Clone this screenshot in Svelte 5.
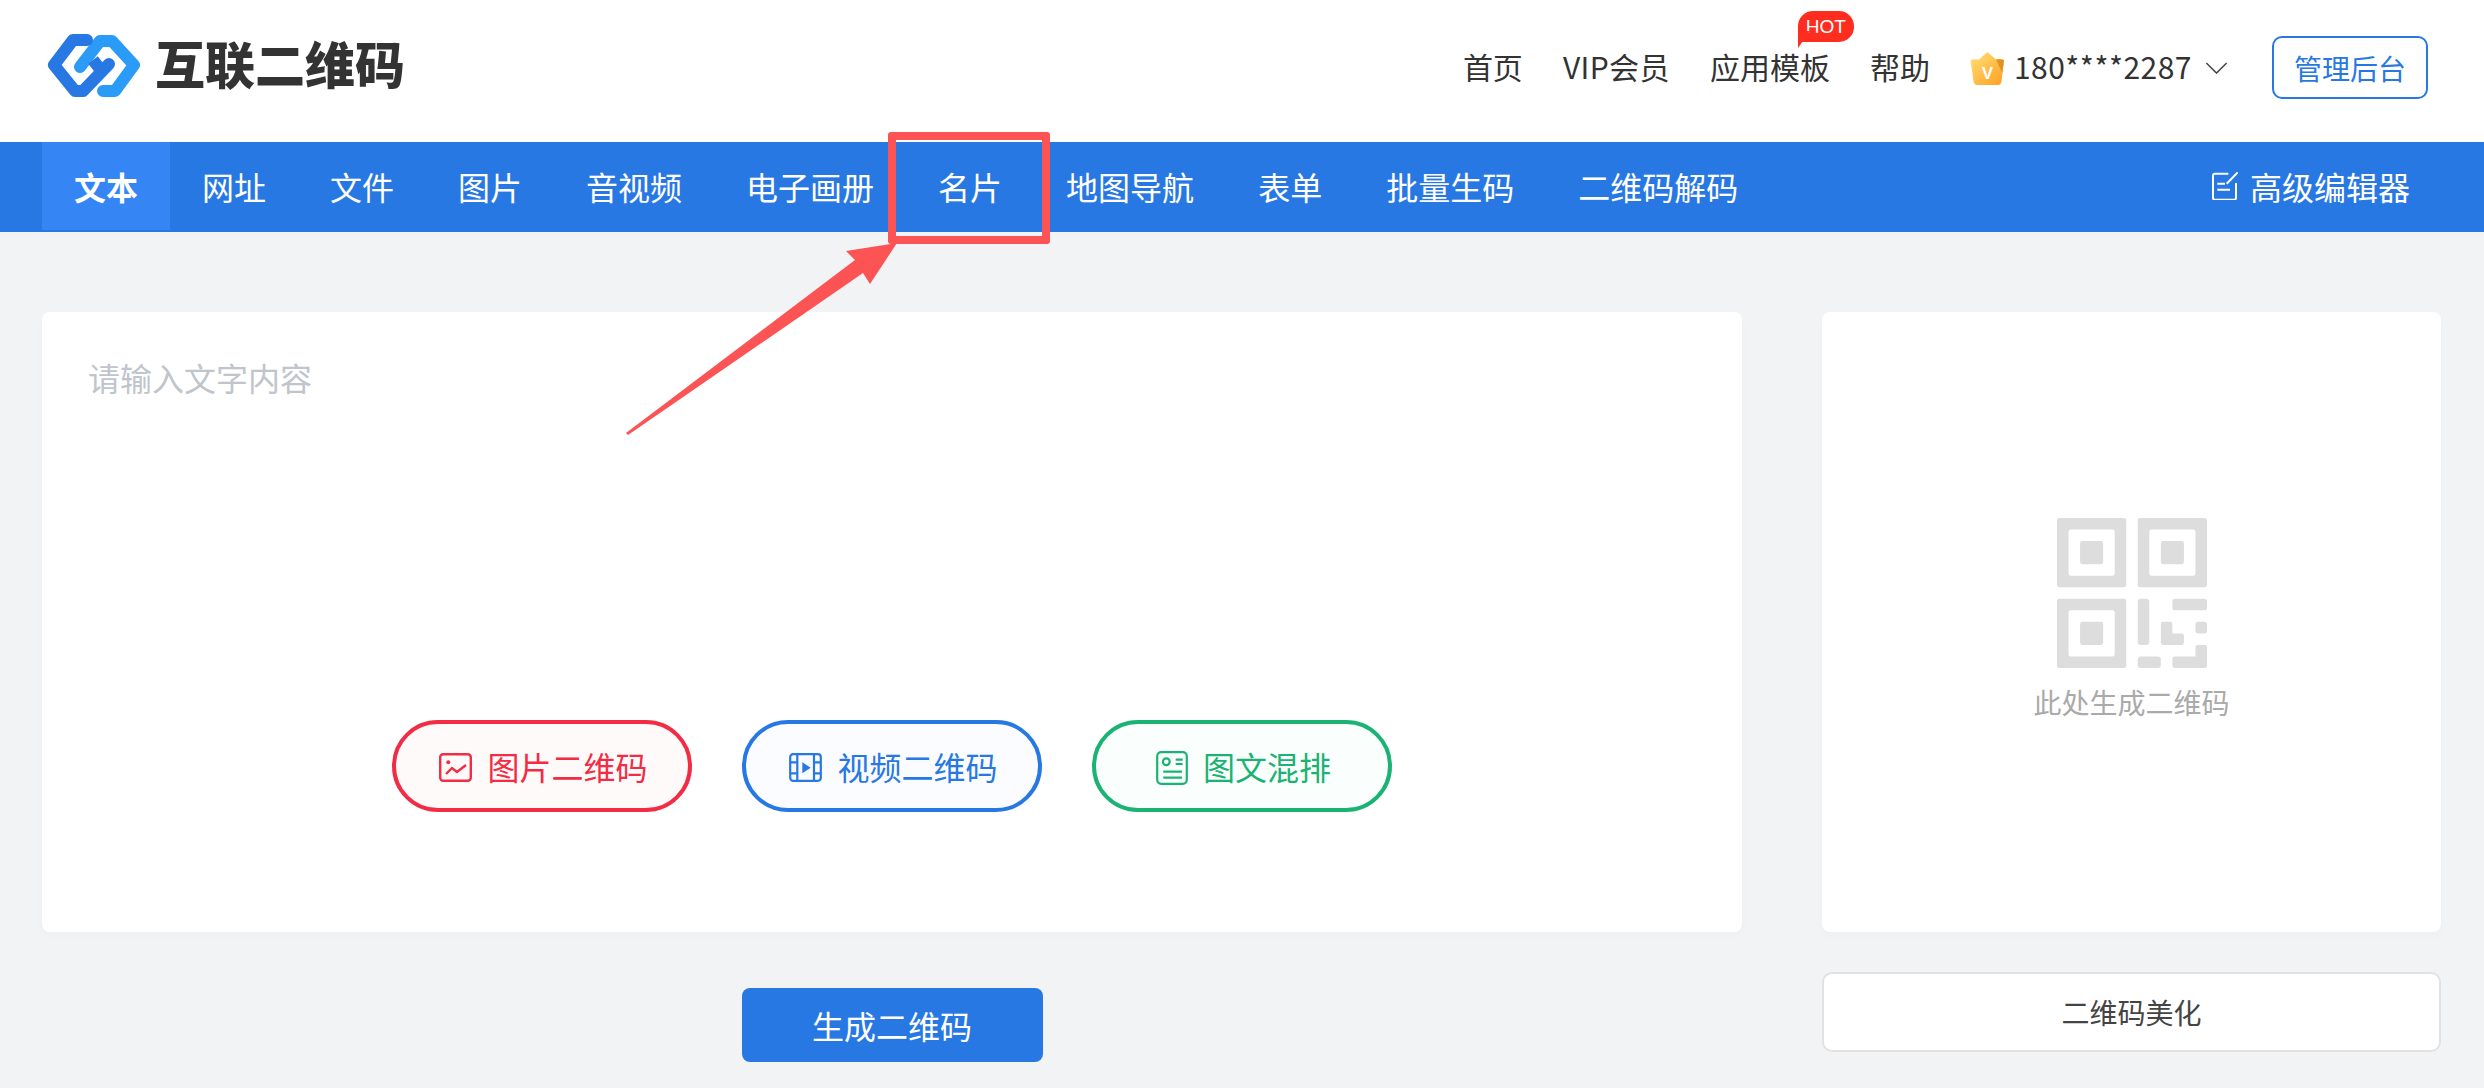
<script>
	const mainTabs = [
		'文本',
		'网址',
		'文件',
		'图片',
		'音视频',
		'电子画册',
		'名片',
		'地图导航',
		'表单',
		'批量生码',
		'二维码解码'
	];
	// top left corner of the three finder squares in the qr placeholder
	const finders = [
		[0, 0],
		[7, 0],
		[0, 7]
	];
</script>

<div class="page">
	<header class="top">
		<div class="logo">
			<svg class="logo-mark" viewBox="0 0 94 65" fill="none" stroke-width="12" stroke-linecap="round" stroke-linejoin="round">
				<path d="M33 34L53 8H65L87 32L68 58H56" stroke="#2a9cf8" />
				<path d="M40 7H26L7 32L28 58H36L62 31" stroke="#2878e4" />
				<path d="M53 36L46 27" stroke="#2878e4" stroke-linecap="butt" />
			</svg>
			<span class="logo-text">互联二维码</span>
		</div>
		<nav class="links">
			<a href="#home">首页</a>
			<a href="#vip" class="vip">VIP会员</a>
			<a href="#tpl" class="tpl">应用模板<span class="hot">HOT</span></a>
			<a href="#help">帮助</a>
			<div class="user">
				<svg class="crown" viewBox="0 0 35 34">
					<defs>
						<linearGradient id="crownFill" x1="0" y1="0" x2="1" y2="1">
							<stop offset="0" stop-color="#ffe27a" />
							<stop offset="1" stop-color="#ff9d1f" />
						</linearGradient>
					</defs>
					<path
						d="M17.3 1L26 8.5Q31 8 34 9L31.5 30Q31 34 28 34H7Q4 34 3.5 30L0.5 9Q4 8 9 8.5Z"
						fill="url(#crownFill)"
					/>
					<path d="M26 8.5Q31 8 34 9L32.4 22Z" fill="#e2921f" />
					<text x="17.5" y="28" class="crown-v">V</text>
				</svg>
				<span class="phone">180****2287</span>
				<svg class="chevron" viewBox="0 0 24 13" fill="none" stroke="#444" stroke-width="1.6">
					<path d="M1 1L12 12L23 1" />
				</svg>
			</div>
			<button class="admin">管理后台</button>
		</nav>
	</header>

	<div class="tabbar">
		<div class="tabs">
			{#each mainTabs as tab, i}
				<a href="#tab" class="tab" class:active={i === 0}>{tab}</a>
			{/each}
		</div>
		<a href="#editor" class="editor">
			<svg viewBox="0 0 26 28" fill="none" stroke="#fff" stroke-width="2">
				<path d="M16.3 1.7H3Q1 1.7 1 3.7V25.7Q1 27.7 3 27.7H22Q24 27.7 24 25.7V11" />
				<path d="M5.3 11.7H13M5.3 17.7H18M14.7 11.7L25.7 0.3" />
			</svg>
			高级编辑器
		</a>
	</div>

	<main class="content">
		<section class="left">
			<div class="card editor-card">
				<div class="placeholder">请输入文字内容</div>
				<div class="pills">
					<button class="pill red">
						<svg viewBox="0 0 33 29" fill="none" stroke="currentColor" stroke-width="2.4">
							<rect x="1.2" y="1.2" width="30.6" height="26.6" rx="3" />
							<path d="M7 21L13 15L18 19L27 12" />
							<circle cx="9.3" cy="9.3" r="2" fill="currentColor" stroke="none" />
						</svg>
						图片二维码
					</button>
					<button class="pill blue">
						<svg viewBox="0 0 33 29" fill="none" stroke="currentColor" stroke-width="2.2">
							<rect x="1.2" y="1.2" width="30.6" height="26.6" rx="3" />
							<path d="M8.3 1V28M25 1V28M1 9.3H8.3M1 20.3H8.3M25 9.3H32M25 20.3H32" />
							<path d="M13.3 9.3L21.7 14.7L13.3 20.3Z" fill="currentColor" stroke="none" />
						</svg>
						视频二维码
					</button>
					<button class="pill green">
						<svg viewBox="0 0 32 34" fill="none" stroke="currentColor" stroke-width="2.2">
							<rect x="1.2" y="1.2" width="29.6" height="31.6" rx="4" />
							<circle cx="10.3" cy="10.7" r="3.4" />
							<path d="M19.7 8.7H26.7M19.7 13H26.7M7.3 20.7H26M7.3 26.7H26" />
						</svg>
						图文混排
					</button>
				</div>
			</div>
			<button class="generate">生成二维码</button>
		</section>

		<aside class="right">
			<div class="card preview">
				<svg class="qr" viewBox="0 0 13 13" fill="#ddd">
					{#each finders as [fx, fy]}
						<rect x={fx} y={fy} width="6" height="6" rx="0.2" />
						<rect x={fx + 1} y={fy + 1} width="4" height="4" rx="0.2" fill="#fff" />
						<rect x={fx + 2} y={fy + 2} width="2" height="2" rx="0.2" />
					{/each}
					<rect x="7" y="7" width="1" height="4" rx="0.25" />
					<rect x="10" y="7" width="3" height="1" rx="0.25" />
					<rect x="12" y="9" width="1" height="1" rx="0.25" />
					<rect x="7" y="12" width="2" height="1" rx="0.25" />
					<path d="M9.2 9H9.8Q10 9 10 9.2V10H10.8Q11 10 11 10.2V10.8Q11 11 10.8 11H9.2Q9 11 9 10.8V9.2Q9 9 9.2 9Z" />
					<path d="M12.2 11H12.8Q13 11 13 11.2V12.8Q13 13 12.8 13H10.2Q10 13 10 12.8V12.2Q10 12 10.2 12H12V11.2Q12 11 12.2 11Z" />
				</svg>
				<p>此处生成二维码</p>
			</div>
			<button class="beautify">二维码美化</button>
		</aside>
	</main>

	<!-- annotation drawn on top of the page -->
	<div class="mark-box"></div>
	<svg class="mark-arrow" viewBox="0 0 2484 1088">
		<path d="M626 433L855 260L846 251L897 243L870 284L863 273L628 435Z" fill="#fc5454" />
	</svg>
</div>

<style>
	:global(body) {
		margin: 0;
		background: #f1f3f5;
	}
	.page {
		position: relative;
		height: 1088px;
		overflow: hidden;
		font-family: 'Noto Sans CJK SC', 'Noto Sans', sans-serif;
		color: #333;
	}
	a {
		color: inherit;
		text-decoration: none;
	}
	button {
		font-family: inherit;
		cursor: pointer;
	}
	.top {
		display: flex;
		align-items: center;
		justify-content: space-between;
		height: 142px;
		background: #fff;
		padding: 0 56px 11px 47px;
		box-sizing: border-box;
	}
	.logo {
		display: flex;
		align-items: center;
		gap: 14px;
	}
	.logo-mark {
		width: 94px;
		height: 65px;
	}
	.logo-text {
		margin-bottom: 8px;
		font-size: 50px;
		font-weight: 900;
		line-height: 1;
		color: #333;
	}
	.links {
		display: flex;
		align-items: center;
		gap: 40px;
		margin-top: 4px;
		font-size: 30px;
		line-height: 40px;
		color: #333;
	}
	.links a,
	.phone {
		margin-bottom: 3px;
	}
	.vip {
		letter-spacing: 0.4px;
	}
	.tpl {
		position: relative;
	}
	.hot {
		position: absolute;
		left: 88px;
		top: -35px;
		width: 56px;
		height: 31px;
		background: #ff2d20;
		color: #fff;
		font-family: 'Liberation Sans', sans-serif;
		font-size: 19px;
		line-height: 31px;
		text-align: center;
		border-radius: 15px 15px 15px 0;
	}
	.hot::after {
		content: '';
		position: absolute;
		left: 0;
		top: 20px;
		border-right: 12px solid transparent;
		border-top: 17px solid #ff2d20;
	}
	.user {
		display: flex;
		align-items: center;
		gap: 9px;
	}
	.crown {
		width: 35px;
		height: 34px;
	}
	.crown-v {
		fill: #fff;
		font-family: 'Liberation Sans', sans-serif;
		font-size: 17px;
		font-weight: 700;
		text-anchor: middle;
	}
	.phone {
		font-size: 30px;
		letter-spacing: 0.5px;
	}
	.chevron {
		width: 23px;
		height: 12px;
		margin-left: 4px;
	}
	.admin {
		width: 156px;
		height: 63px;
		margin-left: 4px;
		padding: 0;
		border: 2px solid #2878e4;
		border-radius: 10px;
		background: #fff;
		color: #2878e4;
		font-size: 28px;
	}
	.tabbar {
		display: flex;
		align-items: flex-start;
		justify-content: space-between;
		height: 90px;
		padding: 0 74px 0 42px;
		background: #2878e4;
		color: #fff;
	}
	.tabs {
		display: flex;
	}
	.tab {
		height: 88px;
		padding: 0 32px;
		font-size: 32px;
		line-height: 88px;
	}
	.tab.active {
		background: #3586f4;
		font-weight: 700;
	}
	.editor {
		display: flex;
		align-items: center;
		gap: 12px;
		height: 88px;
		font-size: 32px;
	}
	.editor svg {
		width: 26px;
		height: 28px;
	}
	.content {
		display: flex;
		gap: 80px;
		padding: 80px 43px 0 42px;
	}
	.left {
		display: flex;
		flex-direction: column;
		align-items: center;
		width: 1700px;
	}
	.right {
		display: flex;
		flex-direction: column;
		width: 619px;
	}
	.card {
		box-sizing: border-box;
		height: 620px;
		background: #fff;
		border-radius: 8px;
		box-shadow: 0 4px 8px rgba(0, 0, 0, 0.02);
	}
	.editor-card {
		display: flex;
		flex-direction: column;
		justify-content: space-between;
		align-self: stretch;
		padding: 43px 0 120px 46px;
	}
	.placeholder {
		font-size: 32px;
		line-height: 44px;
		color: #c0c4cc;
	}
	.pills {
		display: flex;
		justify-content: center;
		gap: 50px;
		padding-right: 46px;
	}
	.pill {
		display: flex;
		align-items: center;
		justify-content: center;
		gap: 15px;
		box-sizing: border-box;
		width: 300px;
		height: 92px;
		padding: 0 0 0 3px;
		border: 4px solid currentColor;
		border-radius: 46px;
		font-size: 32px;
	}
	.pill svg {
		width: 33px;
		height: 29px;
		margin-top: 3px;
	}
	.pill.green svg {
		width: 32px;
		height: 34px;
	}
	.red {
		color: #f22c44;
		background: #fffafa;
	}
	.blue {
		color: #2878e4;
		background: #fafcff;
	}
	.green {
		color: #1bb373;
		background: #fafffd;
	}
	.generate {
		width: 301px;
		height: 74px;
		margin-top: 56px;
		padding: 0;
		border: 0;
		border-radius: 8px;
		background: #2878e4;
		color: #fff;
		font-size: 32px;
	}
	.preview {
		display: flex;
		flex-direction: column;
		align-items: center;
		padding-top: 206px;
	}
	.qr {
		width: 150px;
		height: 150px;
	}
	.preview p {
		margin: 14px 0 0;
		font-size: 28px;
		line-height: 40px;
		color: #aaa;
	}
	.beautify {
		height: 80px;
		margin-top: 40px;
		padding: 0;
		border: 2px solid #e2e2e2;
		border-radius: 10px;
		background: #fff;
		color: #444;
		font-size: 28px;
	}
	.mark-box {
		position: absolute;
		left: 888px;
		top: 132px;
		box-sizing: border-box;
		width: 162px;
		height: 112px;
		border: 8px solid #fc5454;
		border-radius: 3px;
	}
	.mark-arrow {
		position: absolute;
		left: 0;
		top: 0;
		width: 2484px;
		height: 1088px;
		pointer-events: none;
	}
</style>
